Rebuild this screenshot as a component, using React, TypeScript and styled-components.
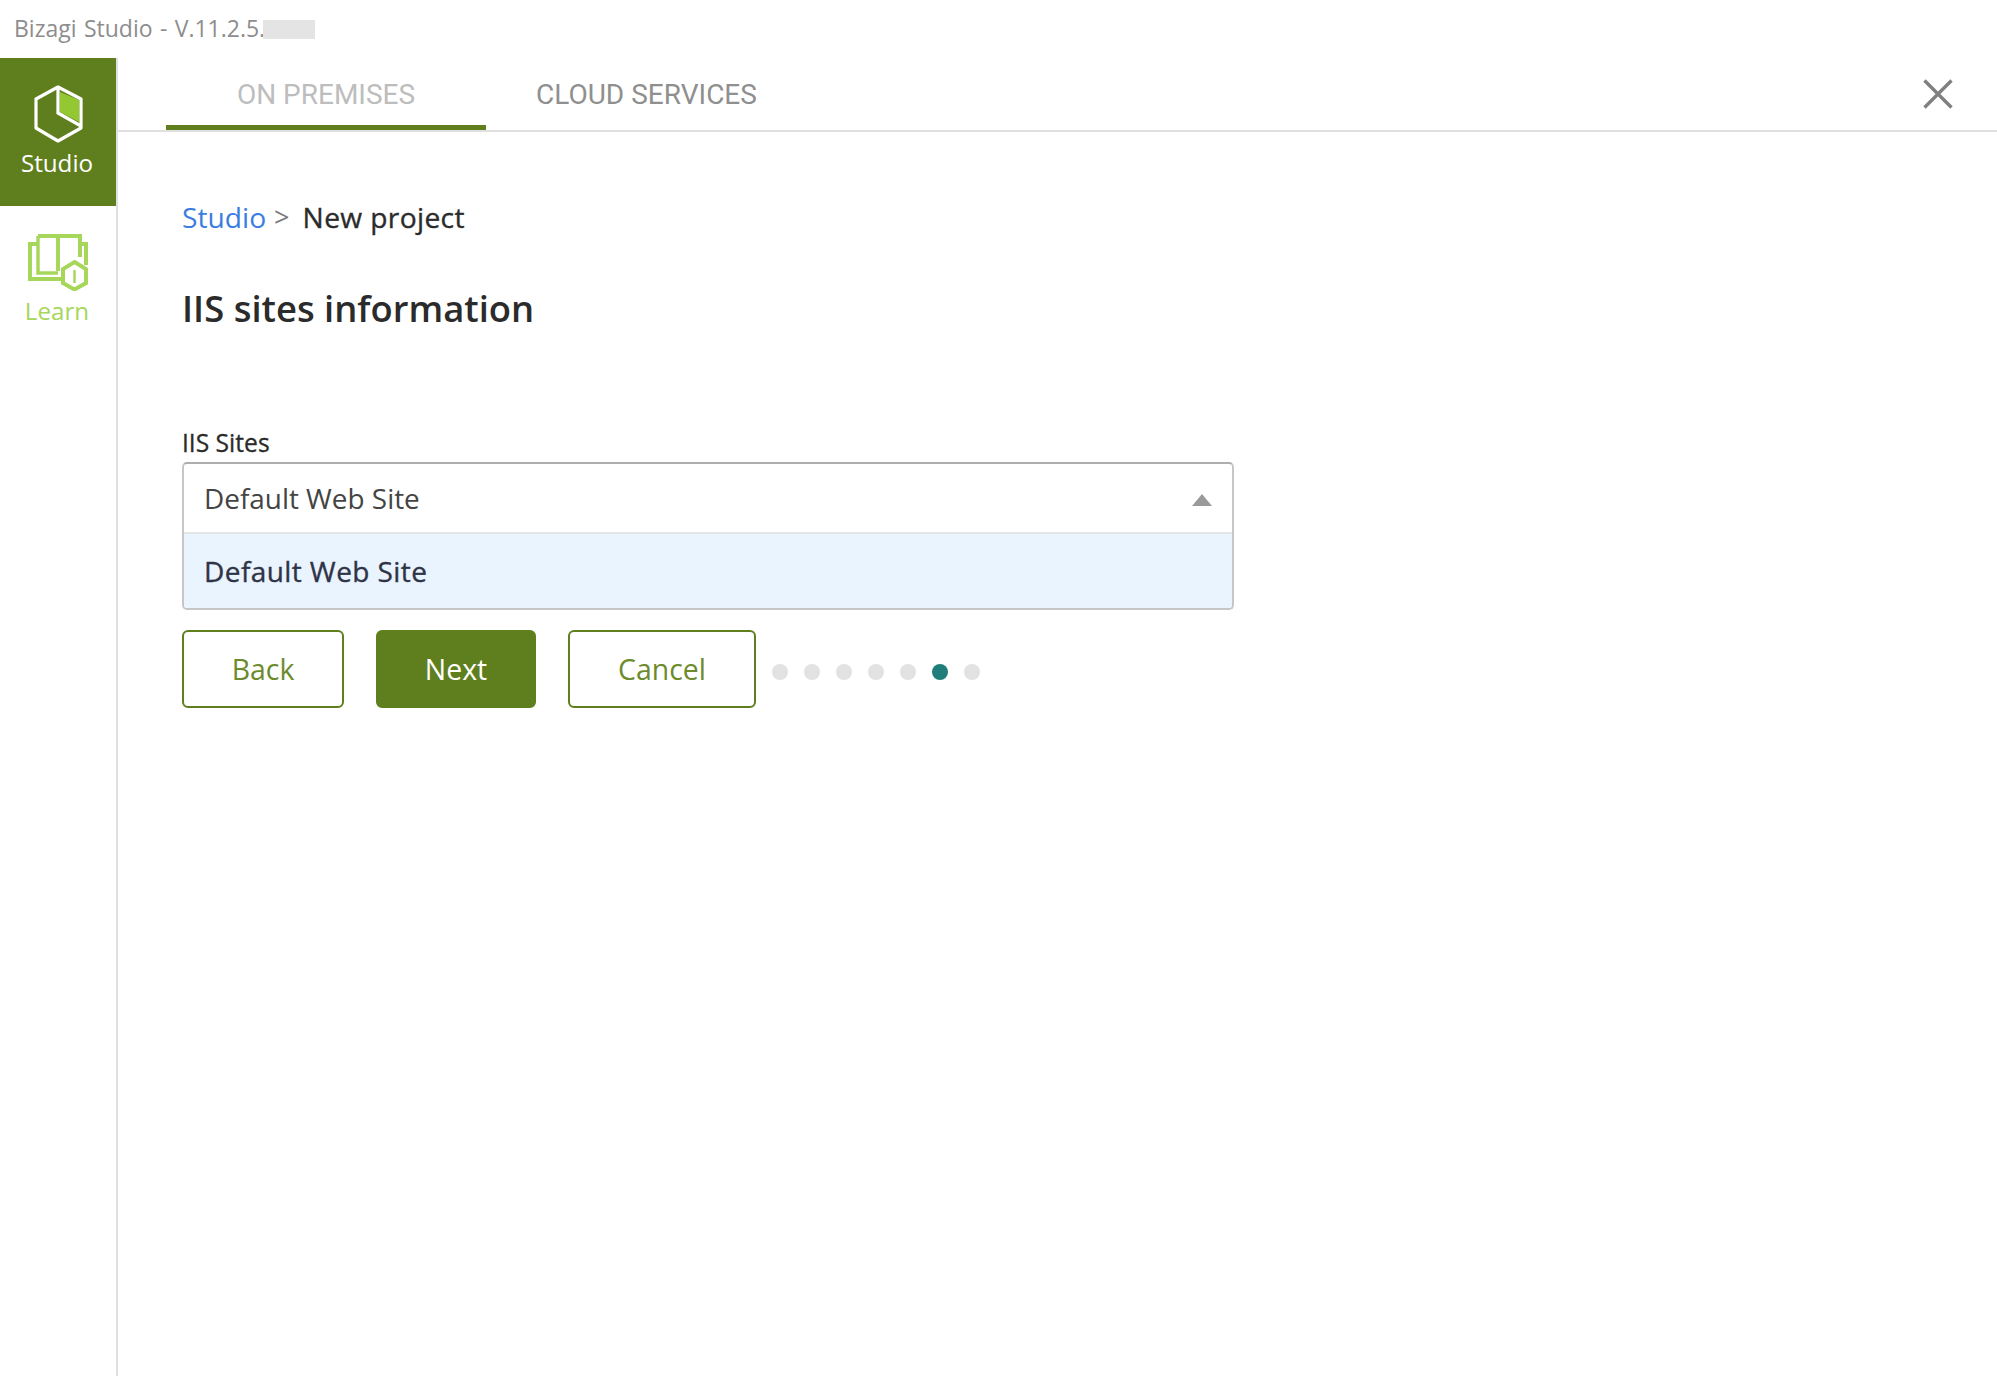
import React from 'react';
import styled, { createGlobalStyle } from 'styled-components';

const GlobalStyle = createGlobalStyle`
    html, body {
        margin: 0;
        height: 100%;
        background: #fff;
    }
    body {
        font-family: "Open Sans", "Liberation Sans", sans-serif;
    }
    #root {
        height: 100%;
    }
`;

const steps = [0, 1, 2, 3, 4, 5, 6];

const StudioIcon = () => (
    <svg width="56" height="60" viewBox="0 0 56 60">
        <path d="M30 7 L49 15 V37 L30 27 Z" fill="#94c832" />
        <path d="M28 2 L51 14 V43 L28 56 L6 43 V14 Z" fill="none" stroke="#fff" strokeWidth="3.2" strokeLinejoin="round" />
        <path d="M28 3 V28 L51 41" fill="none" stroke="#fff" strokeWidth="3.2" />
    </svg>
);

const LearnIcon = () => (
    <svg width="62" height="58" viewBox="0 0 62 58">
        <g fill="none" stroke="#a6d65a" strokeWidth="4">
            <path d="M10 11 H3 V46 H34" />
            <path d="M11 3 H53 V24" />
            <path d="M11 3 V40 H31" strokeWidth="3.4" />
            <path d="M31 3 V38" />
            <path d="M53 11 H59 V32" />
            <path d="M47.5 29 L59 36 V50 L47.5 56.5 L36 50 V36 Z" fill="#fff" strokeWidth="4" />
        </g>
        <path d="M47.5 37 V50" stroke="#a6d65a" strokeWidth="2.4" />
    </svg>
);

const CloseIcon = () => (
    <svg width="30" height="30" viewBox="0 0 30 30">
        <path d="M1.5 1.5 L28.5 28.5 M28.5 1.5 L1.5 28.5" stroke="#808080" strokeWidth="3.4" />
    </svg>
);

const App = (): React.ReactElement => {
    return (
        <Page>
            <GlobalStyle />
            <TitleBar>
                <span>Bizagi Studio - V.11.2.5.</span>
                <Blurred />
            </TitleBar>
            <Body>
                <Sidebar>
                    <NavItem $active>
                        <StudioIcon />
                        <NavLabel $active>Studio</NavLabel>
                    </NavItem>
                    <NavItem>
                        <LearnIcon />
                        <NavLabel>Learn</NavLabel>
                    </NavItem>
                </Sidebar>
                <Main>
                    <TabBar>
                        <Tab $active>ON PREMISES</Tab>
                        <Tab>CLOUD SERVICES</Tab>
                        <CloseButton>
                            <CloseIcon />
                        </CloseButton>
                    </TabBar>
                    <Content>
                        <Breadcrumb>
                            <CrumbLink href="#">Studio</CrumbLink>
                            <CrumbSep>&gt;</CrumbSep>
                            <CrumbCurrent>New project</CrumbCurrent>
                        </Breadcrumb>
                        <Heading>IIS sites information</Heading>
                        <FieldLabel>IIS Sites</FieldLabel>
                        <Select>
                            <SelectValue>
                                <span>Default Web Site</span>
                                <Caret />
                            </SelectValue>
                            <SelectOption>Default Web Site</SelectOption>
                        </Select>
                        <Actions>
                            <Button $width={162}>Back</Button>
                            <Button $width={160} $primary>Next</Button>
                            <Button $width={188}>Cancel</Button>
                            <Dots>
                                {steps.map((s) => (
                                    <Dot key={s} $active={s === 5} />
                                ))}
                            </Dots>
                        </Actions>
                    </Content>
                </Main>
            </Body>
        </Page>
    );
};

export default App;

const Page = styled.div`
    display: flex;
    flex-direction: column;
    height: 100vh;
    overflow: hidden;
`;

const TitleBar = styled.div`
    display: flex;
    align-items: center;
    height: 58px;
    padding: 0 0 3px 14px;
    box-sizing: border-box;
    font-size: 23px;
    word-spacing: 1.4px;
    color: #8d8d8d;
`;

const Blurred = styled.div`
    width: 52px;
    height: 19px;
    margin: 3px 0 0 -2px;
    background: #e4e4e4;
`;

const Body = styled.div`
    display: flex;
    flex: 1;
    min-height: 0;
`;

const Sidebar = styled.nav`
    width: 118px;
    flex-shrink: 0;
    box-sizing: border-box;
    border-right: 2px solid #e0e0e0;
`;

const NavItem = styled.div<{ $active?: boolean }>`
    display: flex;
    flex-direction: column;
    align-items: center;
    height: 148px;
    padding-top: 27px;
    box-sizing: border-box;
    background: ${(p) => (p.$active ? '#5f7f1e' : 'transparent')};
`;

const NavLabel = styled.span<{ $active?: boolean }>`
    font-size: 24.2px;
    line-height: 32px;
    margin: ${(p) => (p.$active ? '2px' : '4px')} 2px 0 0;
    color: ${(p) => (p.$active ? '#fff' : '#a6d65a')};
`;

const Main = styled.main`
    flex: 1;
    min-width: 0;
`;

const TabBar = styled.div`
    display: flex;
    align-items: stretch;
    height: 74px;
    padding-left: 48px;
    box-sizing: border-box;
    border-bottom: 2px solid #e0e0e0;
`;

const Tab = styled.div<{ $active?: boolean }>`
    display: flex;
    align-items: center;
    justify-content: center;
    width: ${(p) => (p.$active ? '320px' : 'auto')};
    margin-left: ${(p) => (p.$active ? '0' : '50px')};
    padding-top: 6px;
    box-sizing: border-box;
    font-family: Roboto, "Liberation Sans", sans-serif;
    font-size: 28px;
    color: ${(p) => (p.$active ? '#bdbdbd' : '#8f8f8f')};
    border-bottom: 5px solid ${(p) => (p.$active ? '#5f7f1e' : 'transparent')};
`;

const CloseButton = styled.div`
    display: flex;
    align-items: center;
    margin-left: auto;
    padding: 0 44px 0 0;
`;

const Content = styled.div`
    display: flex;
    flex-direction: column;
    align-items: flex-start;
    padding: 64px 0 0 64px;
`;

const Breadcrumb = styled.div`
    display: flex;
    align-items: center;
    font-size: 28.2px;
    line-height: 42px;
`;

const CrumbLink = styled.a`
    color: #3b7de0;
    text-decoration: none;
`;

const CrumbSep = styled.span`
    margin: 0 13px 0 8px;
    color: #7a7a7a;
    font-size: 27px;
`;

const CrumbCurrent = styled.span`
    color: #2b2b2b;
    letter-spacing: 0.35px;
    -webkit-text-stroke: 0.35px #2b2b2b;
`;

const Heading = styled.h1`
    margin: 47px 0 0;
    font-size: 36.4px;
    line-height: 46px;
    font-weight: 600;
    color: #2b2b2b;
`;

const FieldLabel = styled.label`
    margin-top: 96px;
    font-size: 24.6px;
    line-height: 32px;
    color: #2b2b2b;
    -webkit-text-stroke: 0.3px #2b2b2b;
`;

const Select = styled.div`
    width: 1052px;
    margin-top: 3px;
    box-sizing: border-box;
    border: 2px solid #c6c6c6;
    border-top-color: #aeaeae;
    border-radius: 5px;
    overflow: hidden;
`;

const SelectValue = styled.div`
    display: flex;
    align-items: center;
    justify-content: space-between;
    height: 70px;
    padding: 0 20px;
    box-sizing: border-box;
    border-bottom: 2px solid #e4e4e4;
    font-size: 27.9px;
    color: #444;
`;

const Caret = styled.span`
    width: 0;
    height: 0;
    margin-top: 3px;
    border-left: 10px solid transparent;
    border-right: 10px solid transparent;
    border-bottom: 12px solid #9a9a9a;
`;

const SelectOption = styled.div`
    display: flex;
    align-items: center;
    height: 74px;
    padding: 0 20px;
    background: #e9f4fe;
    font-size: 28px;
    letter-spacing: 0.42px;
    -webkit-text-stroke: 0.35px #2f3346;
    color: #2f3346;
`;

const Actions = styled.div`
    display: flex;
    align-items: center;
    margin-top: 20px;
`;

const Button = styled.button<{ $width: number; $primary?: boolean }>`
    width: ${(p) => p.$width}px;
    height: 78px;
    margin-right: 32px;
    padding: 0;
    box-sizing: border-box;
    border: 2px solid #5f7f1e;
    border-radius: 6px;
    background: ${(p) => (p.$primary ? '#5f7f1e' : '#fff')};
    color: ${(p) => (p.$primary ? '#fff' : '#6d8a2c')};
    font-family: "Open Sans", "Liberation Sans", sans-serif;
    font-size: 28.4px;
`;

const Dots = styled.div`
    display: flex;
    gap: 16px;
    margin: 6px 0 0 -16px;
`;

const Dot = styled.span<{ $active?: boolean }>`
    width: 16px;
    height: 16px;
    border-radius: 50%;
    background: ${(p) => (p.$active ? '#1f7d7a' : '#e2e2e2')};
`;
